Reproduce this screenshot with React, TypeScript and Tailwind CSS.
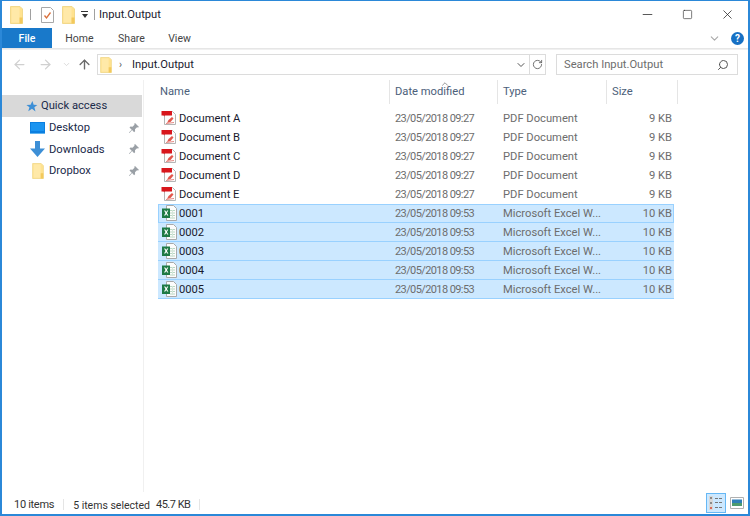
import React from "react";
import { ChevronDown, ChevronUp, ArrowLeft, ArrowRight, ArrowUp, Minus, Square, X, RotateCw, Search } from "lucide-react";

const Folder = ({ className = "" }: { className?: string }) => (
  <svg viewBox="0 0 13 18" className={className}>
    <path d="M.5.5h9.5l2.5 2.5v14.5H.5z" fill="#ffe28f" stroke="#f2d98c" />
    <path d="M1.500 1.500h8v15h-8z" fill="#ffe9a8" />
    <path d="M9.500 11.500h3v6h-3z" fill="#f3c95c" />
  </svg>
);

const Pin = () => (
  <svg viewBox="0 0 12 12" className="h-3 w-3">
    <path d="M7 1l4 4-1 .6-1-.3-2 2 .1 2-1 1-2-2.300L1.500 11 1 10.500l2.700-2.800L1.500 5.600l1-1 2 .1 2-2-.2-1z" fill="#9aa0a6" />
  </svg>
);

const PdfIcon = () => (
  <svg viewBox="0 0 16 16" className="h-4 w-4 shrink-0">
    <path d="M3.500 1.500h8l3 3v10h-11z" fill="#fdfdfd" stroke="#b5b5b5" />
    <path d="M0.500 1h10.500v4.500H3.500v1l-1-1h-2z" fill="#d8161c" />
    <path d="M6 13l1.500-3 3.500-3 1.500 1.500-3 3.500z" fill="#e2574c" />
    <path d="M5 13.500l8-1" stroke="#e58a84" strokeWidth="1" />
  </svg>
);

const XlsIcon = () => (
  <svg viewBox="0 0 16 16" className="h-4 w-4 shrink-0">
    <path d="M5.500.5h7l3 3v12h-10z" fill="#fcfcfc" stroke="#a9a9a9" />
    <path d="M9 5h5v1H9zM9 7.500h5v1H9zM9 10h5v1H9zM9 12.500h5v1H9z" fill="#b9d8c4" />
    <path d="M11 5h1v9h-1z" fill="#d5e6da" />
    <path d="M1 3.500h8v9.500H1z" fill="#1e7a45" />
    <path d="M3 5.500l1.500 2.500L3 10.500h1.300l.9-1.600.9 1.600h1.300L5.900 8l1.400-2.500H6.100l-.9 1.600-.9-1.600z" fill="#fff" />
  </svg>
);

type FileRow = { name: string; date: string; kind: string; size: string; selected: boolean };

const files: FileRow[] = [
  { name: "Document A", date: "23/05/2018 09:27", kind: "PDF Document", size: "9 KB", selected: false },
  { name: "Document B", date: "23/05/2018 09:27", kind: "PDF Document", size: "9 KB", selected: false },
  { name: "Document C", date: "23/05/2018 09:27", kind: "PDF Document", size: "9 KB", selected: false },
  { name: "Document D", date: "23/05/2018 09:27", kind: "PDF Document", size: "9 KB", selected: false },
  { name: "Document E", date: "23/05/2018 09:27", kind: "PDF Document", size: "9 KB", selected: false },
  { name: "0001", date: "23/05/2018 09:53", kind: "Microsoft Excel W...", size: "10 KB", selected: true },
  { name: "0002", date: "23/05/2018 09:53", kind: "Microsoft Excel W...", size: "10 KB", selected: true },
  { name: "0003", date: "23/05/2018 09:53", kind: "Microsoft Excel W...", size: "10 KB", selected: true },
  { name: "0004", date: "23/05/2018 09:53", kind: "Microsoft Excel W...", size: "10 KB", selected: true },
  { name: "0005", date: "23/05/2018 09:53", kind: "Microsoft Excel W...", size: "10 KB", selected: true },
];

const navItems = ["Desktop", "Downloads", "Dropbox"];

const App = () => {
  return (
    <div className="h-[516px] w-[750px] flex flex-col overflow-hidden bg-white border-2 border-[#2b88d8] border-t-[1px] font-['Roboto',sans-serif] text-[11.200px] text-[#1a1a2e]">
      {/* title bar */}
      <div className="h-[27px] shrink-0 flex items-center pl-[8px]">
        <Folder className="h-[18px] w-[13px]" />
        <div className="ml-[7px] h-[11px] w-px bg-[#a0a0a0]" />
        <svg viewBox="0 0 13 16" className="ml-[10px] h-[16px] w-[13px]">
          <path d="M.5.500h9l3 3v12H.5z" fill="#fff" stroke="#a8a8a8" />
          <path d="M3.500 8.500l2 2.500L9.500 5.500" fill="none" stroke="#d9703c" strokeWidth="1.300" />
        </svg>
        <Folder className="ml-[8px] h-[18px] w-[13px]" />
        <div className="ml-[6px] flex flex-col items-center gap-[2px]">
          <div className="h-px w-[7px] bg-[#333]" />
          <div className="h-0 w-0 border-x-[3.500px] border-t-[4px] border-x-transparent border-t-[#333]" />
        </div>
        <div className="ml-[6px] h-[11px] w-px bg-[#a0a0a0]" />
        <span className="ml-[4px] pt-[2px]">Input.Output</span>
        <div className="ml-auto flex items-center pr-[13px] gap-[27px] text-[#222]">
          <Minus size={15} strokeWidth={1.200} />
          <Square size={11} strokeWidth={1.300} />
          <X size={15} strokeWidth={1.200} />
        </div>
      </div>

      {/* ribbon */}
      <div className="h-[21px] shrink-0 flex items-stretch border-b border-[#e6e6e6]">
        <div className="w-[50px] pt-[1px] flex items-center justify-center bg-[#1979ca] text-white text-[10.500px] font-medium">File</div>
        <div className="w-[55px] pt-[2px] flex items-center justify-center text-[10.500px] text-[#444]">Home</div>
        <div className="w-[49px] pt-[2px] flex items-center justify-center text-[10.500px] text-[#444]">Share</div>
        <div className="w-[47px] pt-[2px] flex items-center justify-center text-[10.500px] text-[#444]">View</div>
        <div className="ml-auto flex items-center pr-[4px] gap-[10px]">
          <ChevronDown size={13} className="text-[#a9a9a9]" />
          <div className="h-[13px] w-[13px] rounded-full bg-[#1670c4] text-white text-[10px] font-bold flex items-center justify-center">?</div>
        </div>
      </div>

      {/* address row */}
      <div className="h-[31px] shrink-0 flex items-center pl-[10px] pr-[10px] pb-[1px] border-t border-[#f0f0f0]">
        <ArrowLeft size={15} className="text-[#d0d0d0]" />
        <ArrowRight size={15} className="ml-[11px] text-[#d0d0d0]" />
        <ChevronDown size={9} className="ml-[9px] text-[#d0d0d0]" />
        <ArrowUp size={15} strokeWidth={2.200} className="ml-[6px] text-[#6b6b6b]" />
        <div className="ml-[5px] h-[21px] w-[449px] flex items-center border border-[#dcdcdc]">
          <Folder className="ml-[2px] h-[16px] w-[12px]" />
          <span className="ml-[7px] text-[#555] text-[10px]">›</span>
          <span className="ml-[10px] pt-[1px]">Input.Output</span>
          <ChevronDown size={12} strokeWidth={2} className="ml-auto mr-[2px] text-[#555]" />
          <div className="h-full w-[16px] flex items-center justify-center border-l border-[#dcdcdc]">
            <RotateCw size={11} className="text-[#666]" />
          </div>
        </div>
        <div className="ml-[10px] h-[21px] flex-1 flex items-center justify-between border border-[#dcdcdc] pl-[7px] pr-[8px] text-[#6d6d6d]">
          <span className="pt-[1px]">Search Input.Output</span>
          <Search size={12} className="-scale-x-100 text-[#555]" />
        </div>
      </div>

      {/* body */}
      <div className="flex-1 flex min-h-0">
        <div className="w-[142px] shrink-0 border-r border-[#f0f0f0] pt-[15px]">
          <div className="h-[22px] w-[140px] flex items-center bg-[#d9d9d9] pl-[23px] text-[#1a2a4a]">
            <svg viewBox="0 0 14 14" className="h-[13px] w-[13px]">
              <path d="M8 1l1.300 4 4 .3-3.200 2.500 1.200 4.500L7.500 9.500 3.500 12l1.300-4.200L1.500 5.500 6 5.200z" fill="#3d8fd6" />
            </svg>
            <span className="ml-[3px] pt-[1px]">Quick access</span>
          </div>
          {navItems.map((item, i) => (
            <div key={item} className="h-[21.500px] flex items-center pl-[28px] pr-[3px]">
              <div className="w-[15px] h-[18px] flex items-center justify-center">
                {i === 0 && (
                  <svg viewBox="0 0 15 12" className="h-[12px] w-[15px]">
                    <path d="M0 0h15v11H0z" fill="#0b7fe0" />
                    <path d="M1 1h13v8H1z" fill="#1a94f0" />
                    <path d="M0 11h15v1H0z" fill="#62b4ef" />
                  </svg>
                )}
                {i === 1 && (
                  <svg viewBox="0 0 15 16" className="h-[16px] w-[15px]">
                    <path d="M5 0h5v7.500h5L7.500 16 0 7.500h5z" fill="#3d8fd6" />
                  </svg>
                )}
                {i === 2 && <Folder className="h-[16px] w-[12px]" />}
              </div>
              <span className="ml-[4px] pt-[2px] text-[#1a2a4a]">{item}</span>
              <span className="ml-auto">
                <Pin />
              </span>
            </div>
          ))}
        </div>

        <div className="flex-1 min-w-0 pl-[15px]">
          <div className="relative h-[24px] grid grid-cols-[231px_108px_109px_71px] w-[519px] text-[#4c607a]">
            <ChevronUp size={10} className="absolute left-[281px] -top-[1px] text-[#888]" />
            <div className="pl-[1px] flex items-center border-r border-[#e5e5e5]">Name</div>
            <div className="pl-[5px] flex items-center border-r border-[#e5e5e5]">Date modified</div>
            <div className="pl-[5px] flex items-center border-r border-[#e5e5e5]">Type</div>
            <div className="pl-[5px] flex items-center border-r border-[#e5e5e5]">Size</div>
          </div>
          <div className="mt-[5px] w-[516px] -ml-px">
            {files.map((f, i) => (
              <div
                key={f.name}
                className={`h-[19px] grid grid-cols-[232px_108px_109px_67px] items-center ${
                  f.selected ? "bg-[#cce8ff] border-b border-[#99d1ff] " : ""
                }${i === 5 ? "outline outline-[#99d1ff] -outline-offset-1" : ""}`}
              >
                <div className="pl-[3px] flex items-center gap-[2px] text-[#1a1a2e]">
                  {f.selected ? <XlsIcon /> : <PdfIcon />}
                  <span className="pt-[2px]">{f.name}</span>
                </div>
                <div className="pt-[2px] pl-[5px] text-[#6d6d6d] text-[11px] tracking-[-0.6px]">{f.date}</div>
                <div className="pt-[2px] pl-[5px] text-[#6d6d6d] whitespace-nowrap">{f.kind}</div>
                <div className="pt-[2px] pr-[2px] text-right text-[#6d6d6d]">{f.size}</div>
              </div>
            ))}
          </div>
        </div>
      </div>

      {/* status bar */}
      <div className="h-[22px] shrink-0 flex items-center pl-[12px] text-[#333]">
        <span className="pt-[5px] text-[11px] tracking-[-0.3px]">10 items</span>
        <div className="ml-[9px] mt-[3px] h-[11px] w-px bg-[#e5e5e5]" />
        <span className="ml-[9px] pt-[5px] text-[10.500px]">5 items selected</span>
        <span className="ml-[6px] pt-[5px] text-[11px] tracking-[-0.5px]">45.7 KB</span>
        <div className="ml-[9px] mt-[3px] h-[11px] w-px bg-[#e5e5e5]" />
        <div className="ml-auto h-[20px] w-[20px] flex items-center justify-center bg-[#cce8ff] border border-[#66b8f5]">
          <svg viewBox="0 0 14 14" className="h-[14px] w-[14px]">
            <path d="M0 0h4v14H0z" fill="#d8d8d8" />
            <path d="M1 1h2v2H1zM1 6h2v2H1z" fill="#8a8a8a" />
            <path d="M1 11h2v2H1z" fill="#d86a5c" />
            <path d="M6 2h3v1H6zM10 2h3v1h-3zM6 6h3v1H6zM10 6h3v1h-3zM6 11h3v1H6zM10 11h3v1h-3z" fill="#777" />
          </svg>
        </div>
        <div className="ml-[1px] mr-[1px] h-[20px] w-[20px] flex items-center justify-center">
          <svg viewBox="0 0 14 12" className="h-[12px] w-[14px]">
            <path d="M.5.500h13v11H.5z" fill="#fff" stroke="#b0b0b0" />
            <path d="M2 2.500h10V6H2z" fill="#2f7fb8" />
            <path d="M2 6h10v3H2z" fill="#4d9b6f" />
          </svg>
        </div>
      </div>
    </div>
  );
};

export default App;
